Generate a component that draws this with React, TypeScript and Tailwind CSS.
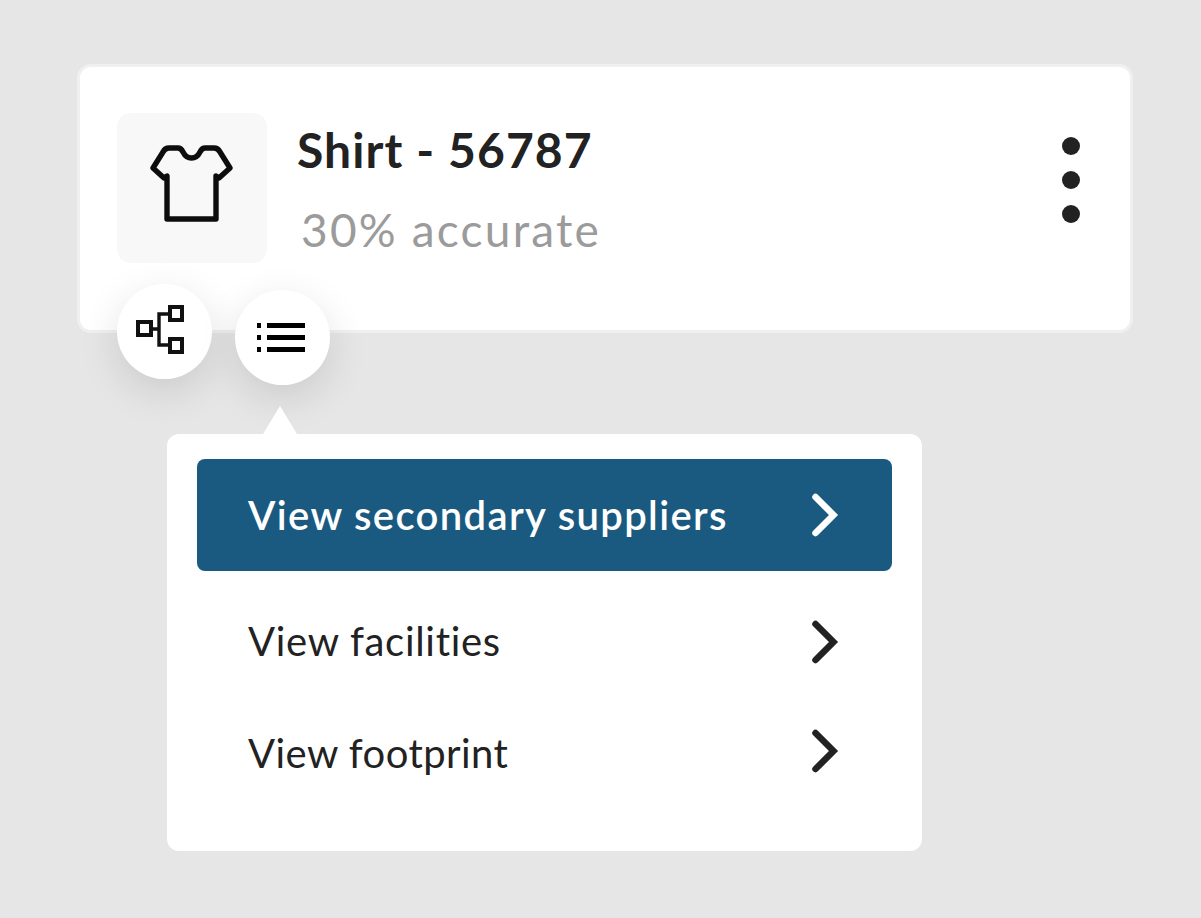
const Chevron = ({ className }: { className?: string }) => (
  <svg width="28" height="46" viewBox="0 0 28 46" fill="none" className={className}>
    <path d="M4.5 5 L22.5 23 L4.5 41" stroke="currentColor" strokeWidth="6.5" strokeLinecap="round" strokeLinejoin="miter" />
  </svg>
);

const ShirtIcon = () => (
  <svg width="83" height="77" viewBox="0 0 83 77" fill="none" className="mb-[9px] -ml-[1px]">
    <path
      d="M17 31 V74 H66 V31 L69 33 L80 23 L70 7 Q68 3 64 3 H55 Q52 3 50 7 Q47 13 41.5 13 Q36 13 33 7 Q31 3 28 3 H19 Q15 3 13 7 L3 23 L14 33 Z"
      stroke="#0d0d0d"
      strokeWidth="5.4"
      strokeLinejoin="round"
    />
  </svg>
);

const NetworkIcon = () => (
  <svg width="50" height="50" viewBox="0 0 50 50" fill="none" stroke="#111" strokeWidth="4" className="mr-[9px] mb-[5px]">
    <rect x="3" y="18" width="13" height="13" />
    <rect x="35" y="3" width="12" height="13" />
    <rect x="35" y="35" width="12" height="13" />
    <path d="M16 25 H24 M35 10 H24 V41 H35" strokeWidth="3.4" />
  </svg>
);

const ListIcon = () => (
  <svg width="50" height="32" viewBox="0 0 50 32" fill="#000" className="mr-[3px] mb-[3px]">
    <rect x="1" y="3" width="4" height="5" />
    <rect x="1" y="15" width="4" height="5" />
    <rect x="1" y="27" width="4" height="5" />
    <rect x="11" y="3" width="38" height="5" />
    <rect x="11" y="15" width="38" height="5" />
    <rect x="11" y="27" width="38" height="5" />
  </svg>
);

const MenuRow = ({
  label,
  active,
  tracking,
  chevronClass,
}: {
  label: string;
  active?: boolean;
  tracking: string;
  chevronClass?: string;
}) => (
  <div
    className={
      active
        ? 'h-[112px] flex items-center justify-between pl-[51px] pr-[53px] rounded-[8px] bg-[#1a5a80] text-white font-semibold mb-[14px]'
        : 'h-[112px] flex items-center justify-between pl-[51px] pr-[53px] text-[#222222]'
    }
  >
    <span className={'text-[40px] leading-none ' + tracking}>{label}</span>
    <Chevron className={chevronClass} />
  </div>
);

export default function App() {
  return (
    <div className="w-[1201px] h-[918px] bg-[#e6e6e6] pt-[64px] pl-[77px] overflow-hidden font-['Lato',sans-serif]">
      <div className="relative w-[1056px]">
        <div className="h-[269px] bg-white border-[3px] border-[#f0f0f0] rounded-[14px] pl-[37px] pt-[46px] pr-[50px] flex items-start">
          <div className="w-[150px] h-[150px] rounded-[14px] bg-[#f8f8f8] flex items-center justify-center">
            <ShirtIcon />
          </div>
          <div className="ml-[30px] flex-1">
            <div className="text-[48px] leading-none font-bold text-[#222222] mt-[13px] tracking-[1.1px]">Shirt - 56787</div>
            <div className="text-[46px] leading-none text-[#9b9b9b] mt-[33px] ml-[4px] tracking-[2.2px]">30% accurate</div>
          </div>
          <div className="flex flex-col gap-[16px] mt-[24px]">
            <span className="w-[18px] h-[18px] rounded-full bg-[#222222]" />
            <span className="w-[18px] h-[18px] rounded-full bg-[#222222]" />
            <span className="w-[18px] h-[18px] rounded-full bg-[#222222]" />
          </div>
        </div>
        <div className="absolute left-[40px] top-[220px] w-[95px] h-[95px] rounded-full bg-white flex items-center justify-center shadow-[0_12px_40px_rgba(0,0,0,0.12)]">
          <NetworkIcon />
        </div>
        <div className="absolute left-[158px] top-[226px] w-[95px] h-[95px] rounded-full bg-white flex items-center justify-center shadow-[0_12px_40px_rgba(0,0,0,0.12)]">
          <ListIcon />
        </div>
      </div>

      <div className="relative ml-[90px] mt-[101px] w-[755px] h-[417px] bg-white rounded-[12px] pt-[25px] px-[30px]">
        <div className="absolute left-[96px] -top-[28px] w-0 h-0 border-l-[17px] border-r-[17px] border-b-[28px] border-l-transparent border-r-transparent border-b-white" />
        <MenuRow label="View secondary suppliers" active tracking="tracking-[1.35px]" />
        <MenuRow label="View facilities" tracking="tracking-[0.7px]" chevronClass="mt-[2px]" />
        <MenuRow label="View footprint" tracking="tracking-[0.45px]" chevronClass="-mt-[4px]" />
      </div>
    </div>
  );
}
